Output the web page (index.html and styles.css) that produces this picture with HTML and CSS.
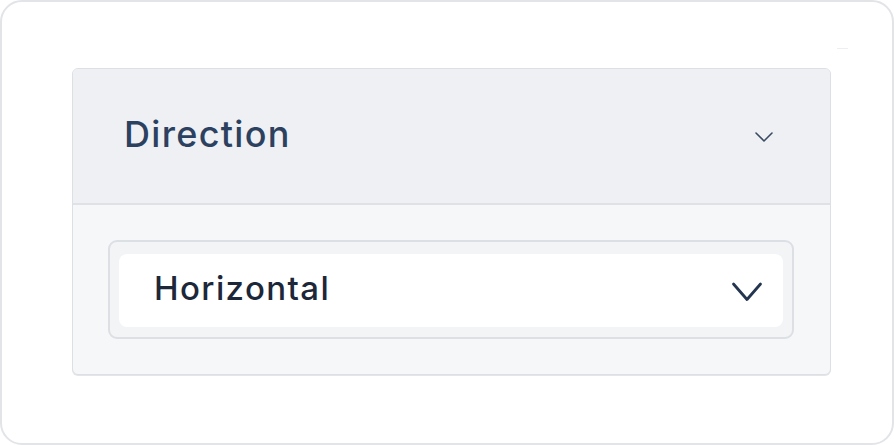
FILE: index.html
```html
<!DOCTYPE html>
<html lang="en">
<head>
<meta charset="utf-8">
<title>Direction</title>
<link rel="stylesheet" href="styles.css">
</head>
<body>
<div class="frame">
  <section class="card">
    <header class="card-head">
      <h2 class="card-title">Direction</h2>
      <svg class="head-chevron" width="20" height="12" viewBox="0 0 20 12" fill="none"><path d="M2 2 L10 10 L18 2" stroke="#3b4a63" stroke-width="1.6" stroke-linecap="round" stroke-linejoin="round"/></svg>
    </header>
    <div class="card-body">
      <div class="select">
        <div class="select-inner">
          <span class="select-value">Horizontal</span>
          <svg class="select-chevron" width="32" height="22" viewBox="0 0 32 22" fill="none"><path d="M2.5 3 L16 18.5 L29.5 3" stroke="#243550" stroke-width="2.8" stroke-linecap="round" stroke-linejoin="round"/></svg>
        </div>
      </div>
    </div>
  </section>
</div>
</body>
</html>
```

FILE: styles.css
```css
* { box-sizing: border-box; }
html, body { margin: 0; padding: 0; background: #ffffff; }
body { font-family: Inter, "Noto Sans", sans-serif; }

.frame {
  position: relative;
  width: 894px;
  height: 445px;
  border: 2px solid #e2e4e8;
  border-radius: 22px;
  padding: 66px 61px 0 70px;
  background: #ffffff;
}
.frame::after {
  content: "";
  position: absolute;
  left: 835px;
  top: 46px;
  width: 11px;
  height: 1px;
  background: #eceef1;
}

.card {
  border: 1px solid #dcdfe4;
  border-radius: 6px;
  overflow: hidden;
  box-shadow: 0 1px 0 #e3e5e9;
  background: #f6f7f9;
}
.card-head {
  height: 136px;
  background: #eff0f3;
  border-bottom: 2px solid #dfe1e6;
  display: flex;
  align-items: center;
  justify-content: space-between;
  padding: 0 56px 4px 51px;
}
.card-title {
  margin: 0;
  font-size: 36px;
  line-height: 1;
  font-weight: 500;
  color: #2c4160;
  letter-spacing: 1.3px;
}
.head-chevron { display: block; margin-top: 6px; }

.card-body {
  padding: 35px 36px 35px 35px;
}
.select {
  border: 2px solid #dcdfe4;
  border-radius: 9px;
  background: #f3f4f6;
  padding: 12px 9px 10px 9px;
}
.select-inner {
  height: 73px;
  background: #ffffff;
  border-radius: 8px;
  display: flex;
  align-items: center;
  justify-content: space-between;
  padding: 0 20px 0 35px;
}
.select-value {
  font-size: 33px;
  line-height: 1;
  font-weight: 500;
  color: #1c2739;
  letter-spacing: 1.4px;
  margin-top: -4px;
}
.select-chevron { display: block; margin-top: 2px; }
```
